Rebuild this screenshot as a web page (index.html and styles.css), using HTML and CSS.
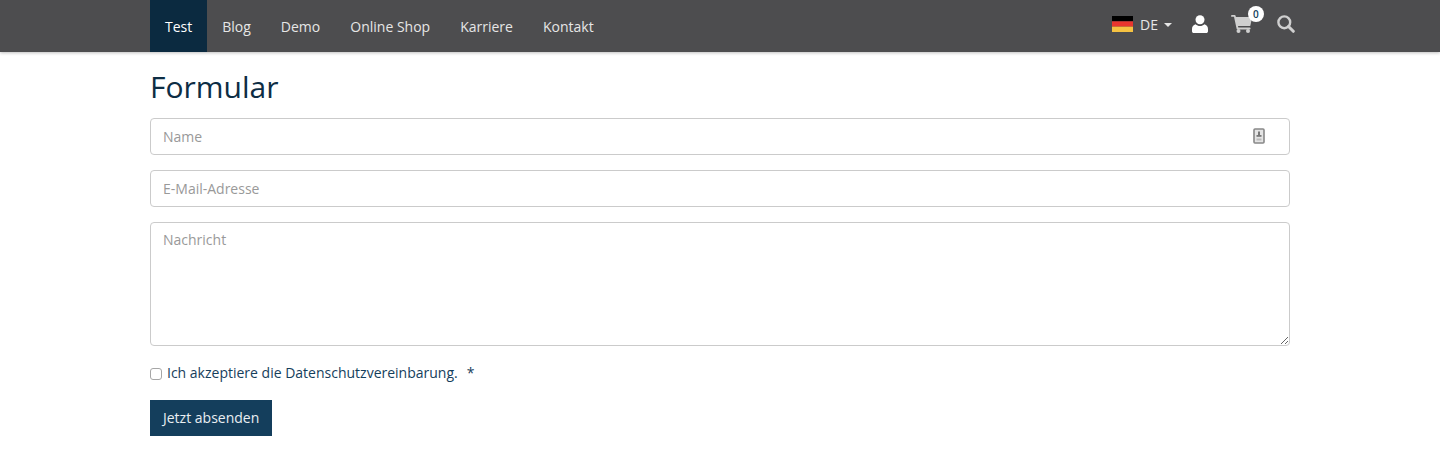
FILE: index.html
```html
<!DOCTYPE html>
<html lang="de">
<head>
<meta charset="utf-8">
<title>Formular</title>
<link rel="stylesheet" href="styles.css">
</head>
<body>
<header class="topbar">
  <div class="container bar">
    <nav class="nav">
      <a class="nav-link active" href="#">Test</a>
      <a class="nav-link" href="#">Blog</a>
      <a class="nav-link" href="#">Demo</a>
      <a class="nav-link" href="#">Online Shop</a>
      <a class="nav-link" href="#">Karriere</a>
      <a class="nav-link" href="#">Kontakt</a>
    </nav>
    <div class="tools">
      <a class="lang" href="#">
        <svg class="flag" width="21" height="16" viewBox="0 0 21 16"><rect width="21" height="5.33" fill="#000"/><rect y="5.33" width="21" height="5.33" fill="#e8352e"/><rect y="10.66" width="21" height="5.34" fill="#f5c242"/></svg>
        <span class="lang-text">DE</span>
        <span class="caret"></span>
      </a>
      <a class="tool user" href="#" aria-label="Konto">
        <svg width="16" height="18" viewBox="0 0 16 18"><circle cx="8" cy="4.7" r="4.5" fill="#fff"/><path d="M3.6 9.2C1.4 9.8 0 11.6 0 14v2.2c0 1 .8 1.8 1.8 1.8h12.4c1 0 1.8-.8 1.8-1.8V14c0-2.4-1.400-4.200-3.600-4.800C11.200 10.400 9.700 11 8 11s-3.200-.6-4.400-1.800z" fill="#fff"/></svg>
      </a>
      <a class="tool cart" href="#" aria-label="Warenkorb">
        <svg width="21" height="18" viewBox="0 0 21 18"><path d="M0 .9C0 .4.4 0 .9 0h2.800c.4 0 .8.300.9.700l.3 1.300h15.200c.6 0 1 .6.900 1.100l-1.600 7.300c-.1.400-.5.700-.9.700H7l.3 1.500h11.400c.5 0 .9.400.9.900s-.4.900-.9.900H6.500c-.4 0-.8-.3-.9-.7L3 1.800H.9C.4 1.800 0 1.400 0 .9z" fill="#cfcfcf"/><circle cx="7.500" cy="16" r="2" fill="#cfcfcf"/><circle cx="17" cy="16" r="2" fill="#cfcfcf"/></svg>
        <span class="badge">0</span>
      </a>
      <a class="tool search" href="#" aria-label="Suche">
        <svg width="18" height="18" viewBox="0 0 18 18"><circle cx="7.300" cy="7.300" r="5.900" fill="none" stroke="#cfcfcf" stroke-width="2.400"/><path d="M11.500 11.500L16.300 16.300" stroke="#cfcfcf" stroke-width="3" stroke-linecap="round"/></svg>
      </a>
    </div>
  </div>
</header>
<main class="container content">
  <h1 class="title">Formular</h1>
  <form class="form">
    <div class="field has-icon">
      <input class="input" type="text" placeholder="Name">
      <svg class="field-icon" width="12" height="16" viewBox="0 0 12 16"><rect x="1" y="1" width="10" height="14" rx="1" fill="#e4e4e4" stroke="#888" stroke-width="1.600"/><rect x="5" y="3.500" width="2" height="3.500" fill="#777"/><rect x="3.500" y="7" width="5" height="1.800" fill="#777"/><rect x="3.500" y="10.500" width="5" height="2" fill="#bbb"/></svg>
    </div>
    <div class="field">
      <input class="input" type="email" placeholder="E-Mail-Adresse">
    </div>
    <div class="field">
      <textarea class="input area" placeholder="Nachricht"></textarea>
    </div>
    <label class="consent">
      <input class="check" type="checkbox">
      <span>Ich akzeptiere die <a class="consent-link" href="#">Datenschutzvereinbarung.</a></span>
      <span class="star">*</span>
    </label>
    <button class="submit" type="button">Jetzt absenden</button>
  </form>
</main>
</body>
</html>
```
FILE: styles.css
```css
* { box-sizing: border-box; }
html, body { margin: 0; padding: 0; }
body {
  font-family: "Open Sans", "Liberation Sans", sans-serif;
  font-size: 14px;
  line-height: 20px;
  color: #0d2d44;
  background: #fff;
}
a { text-decoration: none; color: inherit; }
.container { width: 1140px; margin: 0 auto; }
.topbar {
  height: 52px;
  background: #4d4d4f;
  box-shadow: 0 1px 3px rgba(0, 0, 0, .25);
}
.bar { display: flex; justify-content: space-between; height: 52px; }
.nav { display: flex; }
.nav-link {
  display: block;
  padding: 17px 15px 15px;
  color: #e6e6e6;
}
.nav-link.active { background: #0b2a40; color: #fff; }
.tools { display: flex; align-items: flex-start; width: 184px; margin-right: -6px; }
.lang { display: flex; align-items: center; height: 20px; margin-top: 15px; color: #e6e6e6; }
.flag { margin-top: -2px; }
.lang-text { margin-left: 7px; }
.caret {
  width: 0;
  height: 0;
  margin-left: 6px;
  border: 4px solid transparent;
  border-top-color: #e6e6e6;
  border-bottom: 0;
}
.tool { position: relative; display: block; line-height: 0; margin-top: 15px; }
.user { margin-left: 20px; }
.cart { margin-left: 23px; }
.search { margin-left: 25px; }
.badge {
  position: absolute;
  top: -9px;
  left: 17px;
  width: 16px;
  height: 16px;
  border-radius: 50%;
  background: #fff;
  color: #143e5c;
  font-size: 10px;
  font-weight: 600;
  line-height: 16px;
  text-align: center;
}
.content { padding-top: 15px; }
.title {
  margin: 0 0 12px;
  font-size: 30px;
  font-weight: 400;
  line-height: 39px;
  color: #0d2d44;
}
.form { display: block; }
.field { position: relative; margin-bottom: 15px; }
.input {
  display: block;
  width: 100%;
  height: 37px;
  padding: 6px 12px;
  border: 1px solid #cbcbcb;
  border-radius: 4px;
  font: 14px/20px "Open Sans", "Liberation Sans", sans-serif;
  color: #333;
  background: #fff;
  outline: 0;
}
.input::placeholder { color: #999; opacity: 1; }
.area { height: 124px; padding-top: 7px; resize: vertical; }
.field-icon { position: absolute; top: 10px; right: 25px; }
.consent { display: flex; align-items: center; height: 20px; margin-top: 17px; color: #17405c; }
.check {
  appearance: none;
  width: 12px;
  height: 12px;
  margin: 1px 5px 0 0;
  border: 1px solid #a6a6a6;
  border-radius: 3px;
  background: #fff;
}
.consent-link { color: #143e5c; }
.star { margin-left: 9px; }
.submit {
  display: block;
  height: 36px;
  margin-top: 17px;
  padding: 0 13px;
  border: 0;
  background: #143e5c;
  color: #e9eef2;
  font: 14px/20px "Open Sans", "Liberation Sans", sans-serif;
}
```
